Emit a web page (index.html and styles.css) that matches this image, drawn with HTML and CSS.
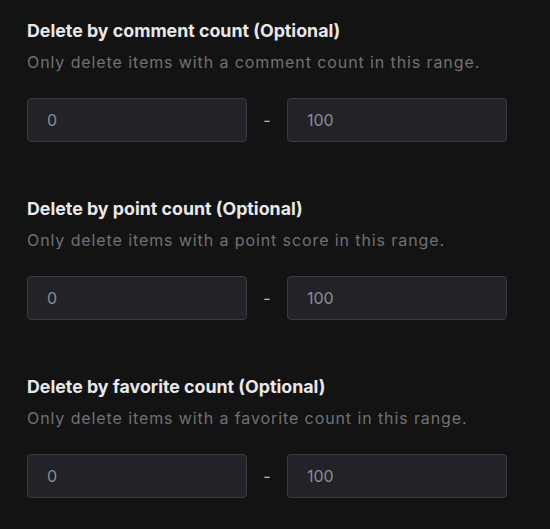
FILE: index.html
```
<!DOCTYPE html>
<html>
<head>
<meta charset="utf-8">
<link rel="stylesheet" href="styles.css">
</head>
<body>
<div class="page">
  <section class="group">
    <h3 class="title">Delete by comment count (Optional)</h3>
    <p class="desc">Only delete items with a comment count in this range.</p>
    <div class="range">
      <div class="field">0</div>
      <span class="dash">-</span>
      <div class="field">100</div>
    </div>
  </section>
  <section class="group">
    <h3 class="title">Delete by point count (Optional)</h3>
    <p class="desc">Only delete items with a point score in this range.</p>
    <div class="range">
      <div class="field">0</div>
      <span class="dash">-</span>
      <div class="field">100</div>
    </div>
  </section>
  <section class="group">
    <h3 class="title">Delete by favorite count (Optional)</h3>
    <p class="desc">Only delete items with a favorite count in this range.</p>
    <div class="range">
      <div class="field">0</div>
      <span class="dash">-</span>
      <div class="field">100</div>
    </div>
  </section>
</div>
</body>
</html>
```
FILE: styles.css
```
html, body {
  margin: 0;
  padding: 0;
  background: #131314;
  font-family: Inter, "Noto Sans", sans-serif;
}
.page {
  padding: 19px 0 0 27px;
  display: flex;
  flex-direction: column;
  gap: 55px;
}
.group {
  display: flex;
  flex-direction: column;
}
.title {
  margin: 0;
  font-size: 17.8px;
  font-weight: 700;
  line-height: 24px;
  color: #e8e8ea;
}
.desc {
  margin: 7px 0 0;
  font-size: 16px;
  line-height: 24px;
  letter-spacing: 0.9px;
  color: #707174;
}
.range {
  margin-top: 24px;
  display: flex;
  align-items: center;
}
.field {
  box-sizing: border-box;
  width: 220px;
  height: 44px;
  padding: 0 19px;
  display: flex;
  align-items: center;
  background: #222328;
  border: 1px solid #3a3b40;
  border-radius: 4px;
  font-size: 16px;
  color: #8b8c91;
}
.dash {
  width: 40px;
  text-align: center;
  font-size: 16px;
  color: #b8b9bd;
}
```
